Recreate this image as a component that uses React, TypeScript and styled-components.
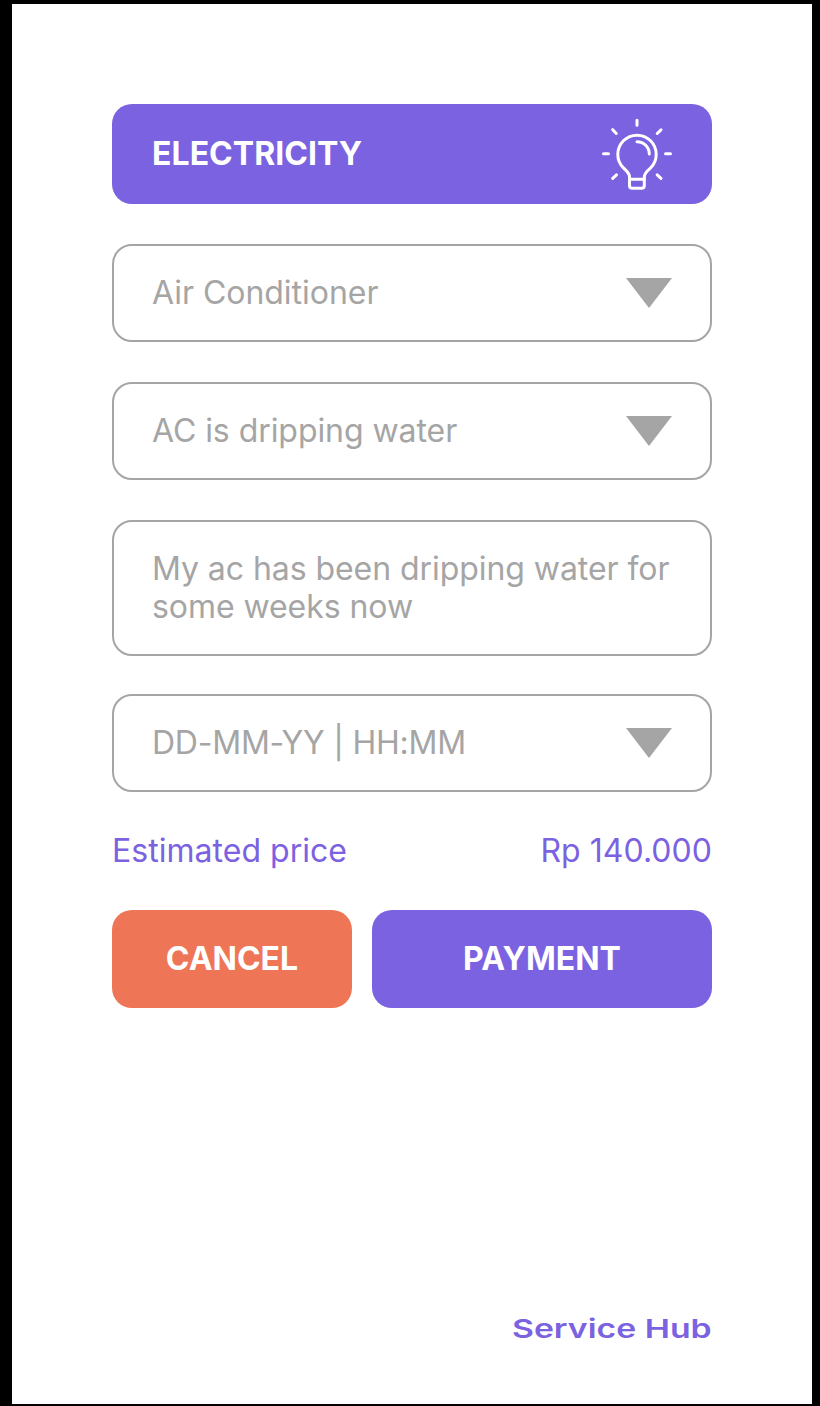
import React from "react";
import styled, { createGlobalStyle } from "styled-components";

const Global = createGlobalStyle`
  * { box-sizing: border-box; }
  body { margin: 0; background: #000; font-family: Inter, sans-serif; }
`;
const Screen = styled.main`
  width: 800px;
  height: 1400px;
  margin: 4px 0 2px 12px;
  padding: 100px 100px 59px;
  background: #fff;
  display: flex;
  flex-direction: column;
`;
const Header = styled.header`
  height: 100px;
  flex-shrink: 0;
  padding: 0 40px;
  border-radius: 20px;
  background: #7b62e1;
  color: #fff;
  display: flex;
  align-items: center;
  justify-content: space-between;
`;
const Title = styled.h1`
  margin: 0;
  font-size: 32px;
  line-height: 38px;
  font-weight: 700;
  letter-spacing: 0.05px;
`;
const Form = styled.section`
  display: flex;
  flex-direction: column;
  margin-top: 40px;
`;
const Field = styled.div<{ $gap?: number; $tracking?: number }>`
  min-height: 98px;
  padding: 28px 38px;
  margin-bottom: ${(p) => p.$gap ?? 40}px;
  border: 2px solid #a5a5a5;
  border-radius: 20px;
  color: #a5a5a5;
  font-size: 32px;
  line-height: 38px;
  letter-spacing: ${(p) => p.$tracking ?? -0.06}px;
  white-space: nowrap;
  display: flex;
  align-items: flex-start;
  justify-content: space-between;
`;
const Arrow = styled.svg`
  width: 46px;
  height: 30px;
  margin-top: 4px;
`;
const Price = styled.div`
  display: flex;
  justify-content: space-between;
  color: #7b62e1;
  font-size: 32px;
  line-height: 38px;
  letter-spacing: 0.03px;
`;
const Actions = styled.div`
  display: flex;
  gap: 20px;
  margin-top: 40px;
`;
const Button = styled.button<{ $color: string; $width: number }>`
  width: ${(p) => p.$width}px;
  height: 98px;
  padding: 0;
  border: 0;
  border-radius: 20px;
  background: ${(p) => p.$color};
  color: #fff;
  font: 700 32px/38px Inter, sans-serif;
`;
const Brand = styled.footer`
  margin-top: auto;
  color: #7b62e1;
  align-self: flex-end;
  font-size: 26px;
  line-height: 32px;
  font-weight: 600;
  transform: scaleX(1.3);
  transform-origin: right center;
`;

const Bulb = () => (
  <svg width="70" height="72" viewBox="0 0 70 72" fill="none" stroke="#fff" strokeWidth="3" strokeLinecap="round" strokeLinejoin="round">
    <path d="M27.500 61.300V59C27.500 55 24.500 52.500 21.500 50A19.200 19.200 0 1 1 48.500 50C45.500 52.500 42.300 55 42.300 59V61.300" />
    <path d="M27.500 61.300H42.300V67.500Q42.300 70.300 39.500 70.300H30.300Q27.500 70.300 27.500 67.500Z" />
    <path d="M35 23.700A12.300 12.300 0 0 1 47.300 36" />
    <path d="M35 2.200V7.200M1.500 35.700H6.500M63.500 35.700H68.500M10.700 11.700L14.300 15.500M59 11.900L55.200 15.500M10.700 60.400L14.500 56.800M59 60.400L55.200 56.800" />
  </svg>
);
const Down = () => (
  <Arrow viewBox="0 0 46 30"><path d="M0 0H46L23 30Z" fill="#a5a5a5" /></Arrow>
);

export default function App() {
  return (
    <>
      <Global />
      <Screen>
        <Header><Title>ELECTRICITY</Title><Bulb /></Header>
        <Form>
          <Field $tracking={-0.03}>Air Conditioner<Down /></Field>
          <Field>AC is dripping water<Down /></Field>
          <Field $gap={38}>My ac has been dripping water for<br />some weeks now</Field>
          <Field $tracking={-0.23}>DD-MM-YY | HH:MM<Down /></Field>
        </Form>
        <Price><span>Estimated price</span><span>Rp 140.000</span></Price>
        <Actions>
          <Button $color="#ee7656" $width={240}>CANCEL</Button>
          <Button $color="#7b62e1" $width={340}>PAYMENT</Button>
        </Actions>
        <Brand>Service Hub</Brand>
      </Screen>
    </>
  );
}
